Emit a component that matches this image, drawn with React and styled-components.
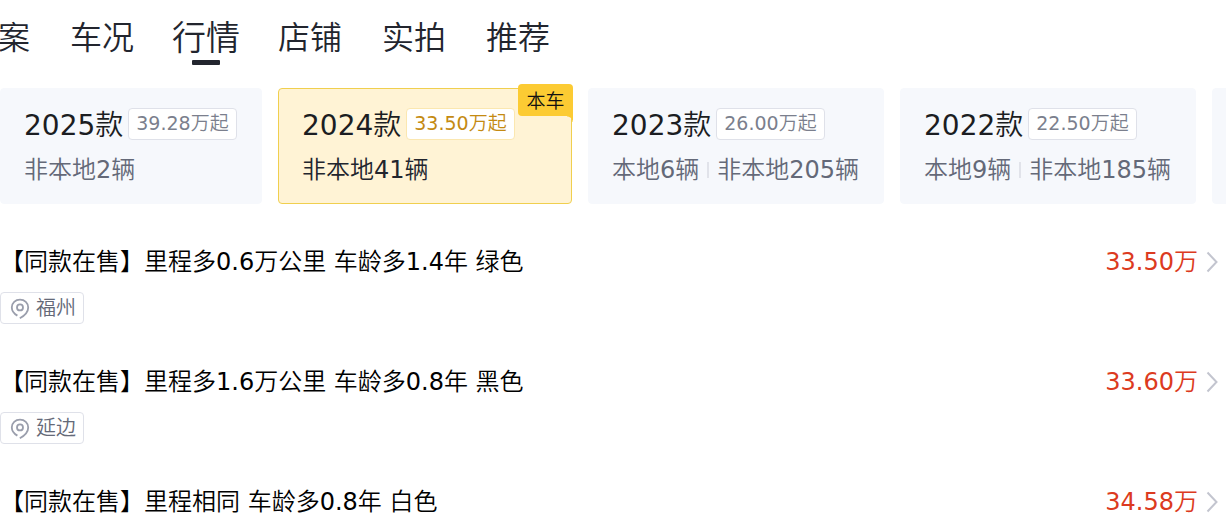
import React, { useState } from 'react'
import styled, { createGlobalStyle } from 'styled-components'

const tabs = ['案', '车况', '行情', '店铺', '实拍', '推荐']

const years = [
    { name: '2025款', price: '39.28万起', counts: ['非本地2辆'], width: 262 },
    { name: '2024款', price: '33.50万起', counts: ['非本地41辆'], width: 294, own: true },
    { name: '2023款', price: '26.00万起', counts: ['本地6辆', '非本地205辆'], width: 296 },
    { name: '2022款', price: '22.50万起', counts: ['本地9辆', '非本地185辆'], width: 296 },
    { name: '', price: '', counts: [], width: 296 }
]

const cars = [
    { title: '【同款在售】里程多0.6万公里 车龄多1.4年 绿色', price: '33.50万', city: '福州' },
    { title: '【同款在售】里程多1.6万公里 车龄多0.8年 黑色', price: '33.60万', city: '延边' },
    { title: '【同款在售】里程相同 车龄多0.8年 白色', price: '34.58万' }
]

const PinIcon = () => (
    <svg width="20" height="22" viewBox="0 0 20 22" fill="none" stroke="#9a9eac" strokeWidth="1.8">
        <path d="M7.4 18.6 C4 16.6 1.8 14 1.8 10.4 C1.8 6 5.4 2.6 10 2.6 C14.6 2.6 18.2 6 18.2 10.4 C18.2 14.6 14.6 18.6 9.8 21.2" />
        <circle cx="10" cy="10.4" r="3" />
    </svg>
)

const Arrow = () => (
    <svg width="12" height="22" viewBox="0 0 12 22" fill="none" stroke="#c3c5cf" strokeWidth="2">
        <path d="M1.5 1.5 L10.5 11 L1.5 20.5" />
    </svg>
)

const App = () => {
    const [active, setActive] = useState('行情')
    const [year, setYear] = useState('2024款')

    return (
        <Page>
            <GlobalStyle />
            <Tabs>
                {tabs.map(tab => (
                    <Tab key={tab} $active={tab === active} onClick={() => setActive(tab)}>{tab}</Tab>
                ))}
            </Tabs>

            <Years>
                {years.map(item => (
                    <YearCard
                        key={item.name}
                        $width={item.width}
                        $active={item.name === year}
                        onClick={() => setYear(item.name)}
                    >
                        {item.own ? <Badge>本车</Badge> : null}
                        {item.name ?
                            <>
                                <YearTop>
                                    <YearName>{item.name}</YearName>
                                    <StartPrice $active={item.name === year}>{item.price}</StartPrice>
                                </YearTop>
                                <Counts $active={item.name === year}>
                                    {item.counts.map(count => <Count key={count}>{count}</Count>)}
                                </Counts>
                            </>
                            : null}
                    </YearCard>
                ))}
            </Years>

            <CarList>
                {cars.map(car => (
                    <li key={car.title}>
                        <CarLink href="#">
                            <CarTitle>{car.title}</CarTitle>
                            <Price>{car.price}</Price>
                            <Arrow />
                        </CarLink>
                        {car.city ? <City><PinIcon />{car.city}</City> : null}
                    </li>
                ))}
            </CarList>
        </Page>
    )
}

export default App

const GlobalStyle = createGlobalStyle`
    * {
        box-sizing: border-box;
    }

    body {
        margin: 0;
        background: #fff;
    }

    body, button {
        font-family: "DejaVu Sans", "Noto Sans CJK SC DemiLight", "Noto Sans CJK SC Light", "Noto Sans CJK SC", sans-serif;
        font-weight: 400;
    }

    button {
        border: 0;
        padding: 0;
        background: none;
        cursor: pointer;
    }
`

const Page = styled.div`
    overflow: hidden;
`

const Tabs = styled.nav`
    display: flex;
    gap: 40px;
    height: 84px;
    padding-top: 16px;
    margin-left: -2px;
`

const Tab = styled.button`
    display: flex;
    flex-direction: column;
    align-items: center;
    height: 49px;
    margin: ${props => props.$active ? '0 -2px' : '0'};
    color: #22252e;
    font-size: ${props => props.$active ? '34px' : '32px'};
    line-height: 44px;
    white-space: nowrap;

    &::after {
        content: '';
        width: 28px;
        height: 5px;
        border-radius: 1px;
        background: ${props => props.$active ? '#22252e' : 'transparent'};
    }
`

const Years = styled.div`
    display: flex;
    gap: 16px;
    padding-top: 4px;
    overflow: hidden;
`

const YearCard = styled.button`
    position: relative;
    display: flex;
    flex-direction: column;
    gap: 14px;
    flex: 0 0 ${props => props.$width}px;
    min-height: 116px;
    padding: 19px 23px 17px;
    border: 1px solid ${props => props.$active ? '#f0cf4e' : '#f6f8fc'};
    border-radius: 4px;
    background: ${props => props.$active ? '#fff3d5' : '#f6f8fc'};
    text-align: left;
`

const YearTop = styled.div`
    display: flex;
    align-items: center;
    gap: 5px;
    height: 32px;
`

const YearName = styled.span`
    padding-top: 4px;
    color: #1b1d22;
    font-size: 28px;
    line-height: 32px;
    white-space: nowrap;
`

const StartPrice = styled.span`
    height: 32px;
    padding: 0 7px;
    border: 1px solid ${props => props.$active ? '#fbe7b0' : '#dfe1e9'};
    border-radius: 4px;
    background: #fff;
    color: ${props => props.$active ? '#c48a12' : '#7b7f8d'};
    font-size: 19px;
    line-height: 29px;
    white-space: nowrap;
`

const Counts = styled.div`
    display: flex;
    color: ${props => props.$active ? '#22252e' : '#646978'};
    font-size: 24px;
    line-height: 32px;
`

const Count = styled.span`
    display: flex;
    align-items: center;
    white-space: nowrap;

    & + &::before {
        content: '';
        width: 2px;
        height: 16px;
        margin: 0 8px;
        background: #e1e3ea;
    }
`

const Badge = styled.span`
    position: absolute;
    top: -5px;
    right: -2px;
    width: 55px;
    height: 32px;
    border-radius: 4px 4px 0 4px;
    background: #fccb33;
    color: #111;
    font-size: 19px;
    line-height: 34px;
    text-align: center;

    &::after {
        content: '';
        position: absolute;
        top: 100%;
        right: 0;
        width: 6px;
        height: 6px;
        background: radial-gradient(circle at 0 100%, transparent 5px, #fccb33 6px);
    }
`

const CarList = styled.ul`
    display: flex;
    flex-direction: column;
    gap: 40px;
    margin: 0;
    padding: 40px 0 0;
    list-style: none;
`

const CarLink = styled.a`
    display: flex;
    align-items: center;
    gap: 8px;
    height: 36px;
    padding-right: 8px;
    color: #000;
    font-size: 24px;
    line-height: 32px;
    text-decoration: none;
`

const CarTitle = styled.span`
    flex: 1;
    white-space: nowrap;
`

const Price = styled.span`
    color: #dc3a20;
`

const City = styled.span`
    display: inline-flex;
    align-items: center;
    gap: 6px;
    height: 32px;
    margin-top: 12px;
    padding: 0 7px 0 9px;
    border: 1px solid #dfe1e9;
    border-radius: 4px;
    color: #646978;
    font-size: 20px;
    line-height: 28px;
    vertical-align: top;
`
